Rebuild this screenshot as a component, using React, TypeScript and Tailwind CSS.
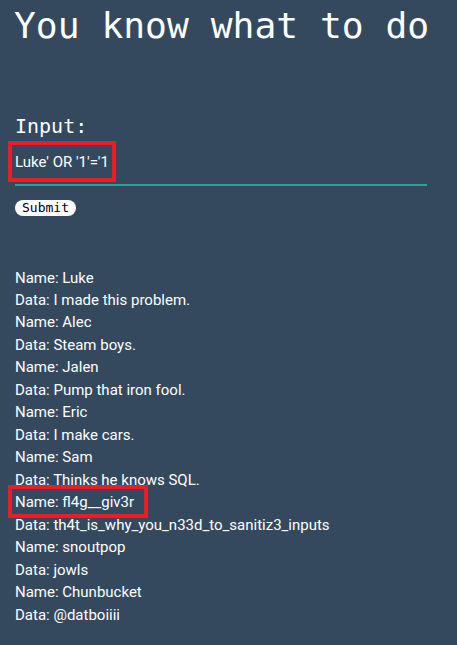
import React, { useState } from "react";

const rows: { name: string; data: string }[] = [
  { name: "Luke", data: "I made this problem." },
  { name: "Alec", data: "Steam boys." },
  { name: "Jalen", data: "Pump that iron fool." },
  { name: "Eric", data: "I make cars." },
  { name: "Sam", data: "Thinks he knows SQL." },
  { name: "fl4g__giv3r", data: "th4t_is_why_you_n33d_to_sanitiz3_inputs" },
  { name: "snoutpop", data: "jowls" },
  { name: "Chunbucket", data: "@datboiiii" },
];

const mono = "font-['DejaVu_Sans_Mono',monospace]";
const roboto = "font-['Roboto','Liberation_Sans',sans-serif]";

export default function App() {
  const [query, setQuery] = useState("Luke' OR '1'='1");

  return (
    <div className="min-h-screen bg-[#34495e] px-[15px] pt-[4px] pb-[20px] text-white">
      <h1 className={`${mono} text-[36.3px] leading-[44px] -ml-[1px]`}>You know what to do</h1>

      <form className="mt-[66px]" onSubmit={(e) => e.preventDefault()}>
        <label className={`${mono} block text-[20px] leading-[24px]`}>Input:</label>
        <div className="relative mt-[2px] w-[412px]">
          <input
            value={query}
            onChange={(e) => setQuery(e.target.value)}
            className={`${roboto} block h-[45px] w-full border-b border-[#26a69a] bg-transparent p-0 text-[15px] text-white shadow-[0_1px_0_0_#26a69a] outline-none`}
          />
          {/* highlight box */}
          <div className="pointer-events-none absolute left-[-7px] top-[1px] h-[41px] w-[108px] border-[4px] border-[#ed1c24]" />
        </div>
        <button
          type="submit"
          className={`${mono} mt-[15px] block h-[16px] rounded-full bg-white px-[7px] text-[13px] leading-[16px] text-black`}
        >
          Submit
        </button>
      </form>

      <div className={`${roboto} mt-[50.5px] text-[15px] leading-[22.47px]`}>
        {rows.map((r) => (
          <React.Fragment key={r.name}>
            <div className="relative">
              Name: {r.name}
              {r.name === "fl4g__giv3r" && (
                <div className="pointer-events-none absolute left-[-7px] top-[-6px] h-[33px] w-[140px] border-[4px] border-[#ed1c24]" />
              )}
            </div>
            <div>Data: {r.data}</div>
          </React.Fragment>
        ))}
      </div>
    </div>
  );
}
